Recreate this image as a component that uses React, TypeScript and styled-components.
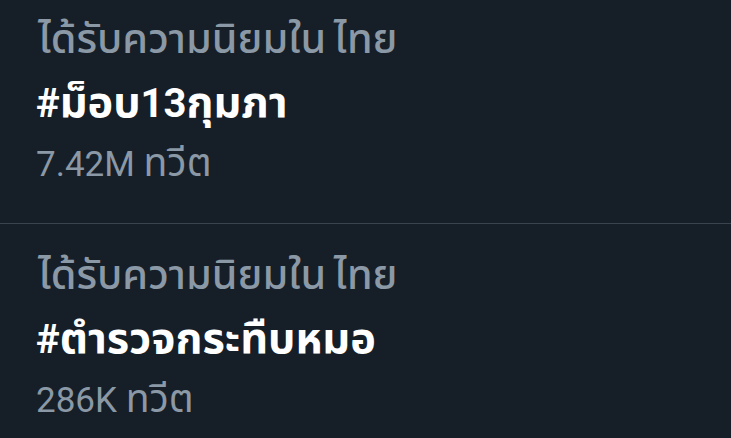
import React from 'react';
import styled, { createGlobalStyle } from 'styled-components';

const GlobalStyle = createGlobalStyle`
  html, body {
    margin: 0;
    padding: 0;
    background: #161f28;
  }
  body {
    font-family: Roboto, "Noto Sans", "Noto Sans Thai", sans-serif;
    -webkit-font-smoothing: antialiased;
  }
`;

const List = styled.div`
  width: 731px;
  height: 438px;
  overflow: hidden;
  background: #161f28;
  display: flex;
  flex-direction: column;
`;

const TrendRow = styled.div<{ $first?: boolean }>`
  display: flex;
  flex-direction: column;
  padding: ${(p) => (p.$first ? '9px' : '21px')} 36px 0;
  height: ${(p) => (p.$first ? '224px' : '235px')};
  box-sizing: border-box;
  border-bottom: 1px solid #3a444e;
  flex-shrink: 0;
`;

const Context = styled.div`
  color: #8b98a5;
  font-size: 30px;
  font-weight: 500;
  line-height: 60px;
  padding-left: 2px;
`;

const Hashtag = styled.div`
  color: #ffffff;
  font-size: 40px;
  font-weight: 700;
  line-height: 60px;
`;

const Count = styled.div`
  color: #8b98a5;
  font-size: 35px;
  line-height: 58px;
`;

const Thai = styled.span<{ $scale: number }>`
  font-size: ${(p) => p.$scale}em;
`;

const withThai = (text: string, scale: number) =>
  text.split(/([\u0E00-\u0E7F]+)/).map((part, i) =>
    /[\u0E00-\u0E7F]/.test(part) ? (
      <Thai key={i} $scale={scale}>
        {part}
      </Thai>
    ) : (
      part
    )
  );

const trends = [
  { context: 'ได้รับความนิยมใน ไทย', tag: '#ม็อบ13กุมภา', count: '7.42M ทวีต' },
  { context: 'ได้รับความนิยมใน ไทย', tag: '#ตำรวจกระทืบหมอ', count: '286K ทวีต' },
];

const App: React.FC = () => (
  <>
    <GlobalStyle />
    <List>
      {trends.map((t, i) => (
        <TrendRow key={t.tag} $first={i === 0}>
          <Context>{withThai(t.context, 1.38)}</Context>
          <Hashtag>{withThai(t.tag, 1.08)}</Hashtag>
          <Count>{withThai(t.count, 1.12)}</Count>
        </TrendRow>
      ))}
    </List>
  </>
);

export default App;
